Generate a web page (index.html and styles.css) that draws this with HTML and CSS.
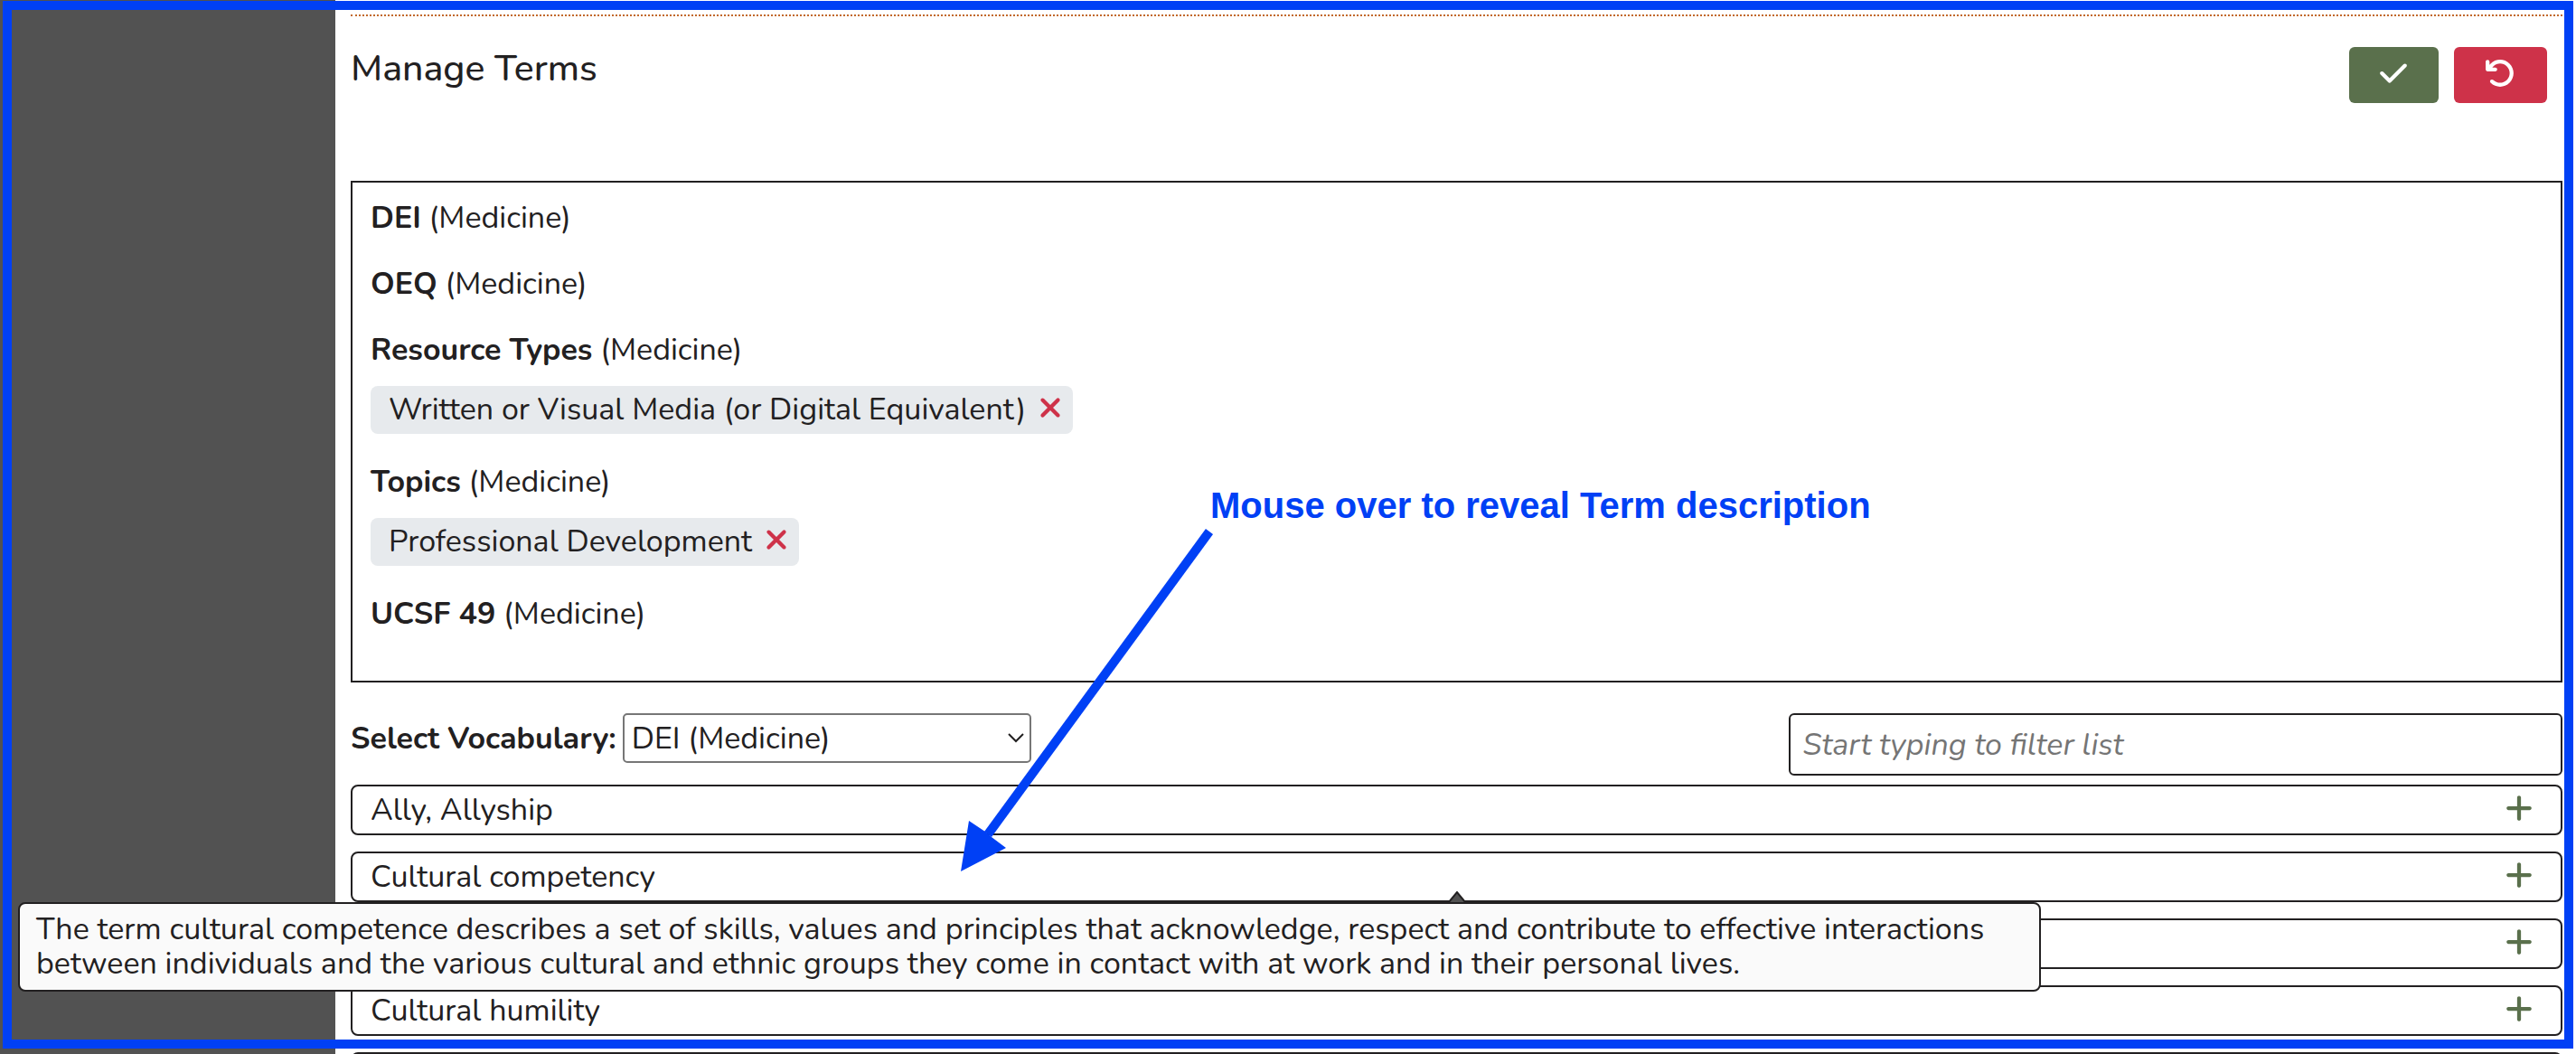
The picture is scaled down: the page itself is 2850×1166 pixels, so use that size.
FILE: index.html
```html
<!DOCTYPE html>
<html lang="en">
<head>
  <meta charset="utf-8">
  <title>Manage Terms</title>
  <link rel="stylesheet" href="styles.css">
</head>
<body>
  <svg class="sprite" aria-hidden="true">
    <symbol id="icon-check" viewBox="0 0 448 512"><path d="M438.6 105.4c12.5 12.5 12.5 32.8 0 45.3l-256 256c-12.5 12.5-32.8 12.5-45.3 0l-128-128c-12.5-12.5-12.5-32.8 0-45.3s32.8-12.5 45.3 0L160 338.7 393.4 105.4c12.5-12.5 32.8-12.5 45.3 0z"/></symbol>
    <symbol id="icon-undo" viewBox="0 0 512 512"><path d="M125.7 160H176c17.7 0 32 14.3 32 32s-14.3 32-32 32H48c-17.7 0-32-14.3-32-32V64c0-17.7 14.3-32 32-32s32 14.3 32 32v51.2L97.6 97.6c87.5-87.5 229.3-87.5 316.8 0s87.5 229.3 0 316.8s-229.3 87.5-316.8 0c-12.5-12.5-12.5-32.8 0-45.3s32.8-12.5 45.3 0c62.5 62.5 163.8 62.5 226.3 0s62.5-163.8 0-226.3s-163.8-62.5-226.3 0L125.7 160z"/></symbol>
    <symbol id="icon-remove" viewBox="0 0 384 512"><path d="M342.6 150.6c12.5-12.5 12.5-32.8 0-45.3s-32.8-12.5-45.3 0L192 210.7 86.6 105.4c-12.5-12.5-32.8-12.5-45.3 0s-12.5 32.8 0 45.3L146.7 256 41.4 361.4c-12.5 12.5-12.5 32.8 0 45.3s32.8 12.5 45.3 0L192 301.3 297.4 406.6c12.5 12.5 32.8 12.5 45.3 0s12.5-32.8 0-45.3L237.3 256 342.6 150.6z"/></symbol>
    <symbol id="icon-plus" viewBox="0 0 448 512"><path d="M256 80c0-17.7-14.3-32-32-32s-32 14.3-32 32V224H48c-17.7 0-32 14.3-32 32s14.3 32 32 32H192V432c0 17.7 14.3 32 32 32s32-14.3 32-32V288H400c17.7 0 32-14.3 32-32s-14.3-32-32-32H256V80z"/></symbol>
  </svg>

  <div class="app">
    <aside class="sidebar"></aside>
    <main class="content">
      <header class="header">
        <h1 class="title">Manage Terms</h1>
        <div class="actions">
          <button class="action action-save" type="button" aria-label="Save"><svg class="icon"><use href="#icon-check"/></svg></button>
          <button class="action action-cancel" type="button" aria-label="Cancel"><svg class="icon icon-wide"><use href="#icon-undo"/></svg></button>
        </div>
      </header>

      <ul class="selected">
        <li class="vocabulary"><strong>DEI</strong> (Medicine)</li>
        <li class="vocabulary"><strong>OEQ</strong> (Medicine)</li>
        <li class="vocabulary"><strong>Resource Types</strong> (Medicine)
          <div class="chips">
            <span class="chip">Written or Visual Media (or Digital Equivalent)<button class="chip-remove" type="button" aria-label="Remove"><svg class="icon icon-narrow"><use href="#icon-remove"/></svg></button></span>
          </div>
        </li>
        <li class="vocabulary"><strong>Topics</strong> (Medicine)
          <div class="chips">
            <span class="chip">Professional Development<button class="chip-remove" type="button" aria-label="Remove"><svg class="icon icon-narrow"><use href="#icon-remove"/></svg></button></span>
          </div>
        </li>
        <li class="vocabulary"><strong>UCSF 49</strong> (Medicine)</li>
      </ul>

      <div class="toolbar">
        <div class="picker">
          <label class="picker-label" for="vocabulary">Select Vocabulary:</label>
          <div class="select-wrap">
            <select class="select" id="vocabulary"><option>DEI (Medicine)</option></select>
            <svg class="chevron" viewBox="0 0 18 11" aria-hidden="true"><path d="M1 1l8 8 8-8"/></svg>
          </div>
        </div>
        <input class="filter" type="text" placeholder="Start typing to filter list" aria-label="Filter list">
      </div>

      <ul class="terms">
        <li class="term"><span class="term-name">Ally, Allyship</span><button class="term-add" type="button" aria-label="Add"><svg class="icon"><use href="#icon-plus"/></svg></button></li>
        <li class="term"><span class="term-name">Cultural competency</span><button class="term-add" type="button" aria-label="Add"><svg class="icon"><use href="#icon-plus"/></svg></button>
          <svg class="tooltip-arrow" viewBox="0 0 20 12" aria-hidden="true"><path d="M1 12L10 1l9 11"/></svg>
          <div class="tooltip" role="tooltip">The term cultural competence describes a set of skills, values and principles that acknowledge, respect and contribute to effective interactions between individuals and the various cultural and ethnic groups they come in contact with at work and in their personal lives.</div>
        </li>
        <li class="term"><span class="term-name"></span><button class="term-add" type="button" aria-label="Add"><svg class="icon"><use href="#icon-plus"/></svg></button></li>
        <li class="term"><span class="term-name">Cultural humility</span><button class="term-add" type="button" aria-label="Add"><svg class="icon"><use href="#icon-plus"/></svg></button></li>
        <li class="term"><span class="term-name"></span></li>
      </ul>
    </main>
  </div>

  <p class="callout">Mouse over to reveal Term description</p>
  <svg class="callout-arrow" viewBox="0 0 300 390" aria-hidden="true">
    <path class="callout-shaft" d="M288 8L43 343"/>
    <path class="callout-head" d="M13 384L22 328L40 340L47 346L63 358Z"/>
  </svg>
  <div class="frame"></div>
</body>
</html>
```
FILE: styles.css
```css
:root {
  --text: #222021;
  --green: #5a704c;
  --red: #ce3249;
  --blue: #0040f5;
}

* {
  box-sizing: border-box;
}

body {
  position: relative;
  height: 100vh;
  margin: 0;
  overflow: hidden;
  background: #fff;
  color: var(--text);
  font: 34px/46px Nunito, "Noto Sans", sans-serif;
}

ul,
p {
  margin: 0;
  padding: 0;
  list-style: none;
}

button {
  margin: 0;
  padding: 0;
  border: 0;
  background: none;
  cursor: pointer;
}

.sprite {
  position: absolute;
  width: 0;
  height: 0;
}

.icon {
  display: block;
  width: 30px;
  height: 34px;
  fill: currentColor;
}

.icon-wide {
  width: 34px;
}

.icon-narrow {
  width: 26px;
}

.app {
  display: flex;
  min-height: 100%;
}

.sidebar {
  flex: none;
  width: 371px;
  background: #525252;
}

.content {
  flex: 1;
  min-width: 0;
  padding: 16px 15px 0 17px;
}

/* Heading and actions */
.header {
  display: flex;
  justify-content: space-between;
  align-items: flex-start;
  padding: 30px 17px 86px 0;
  border-top: 2px dotted #c2692a;
}

.title {
  margin: 0;
  font-size: 41px;
  font-weight: 500;
  line-height: 56px;
}

.actions {
  display: flex;
  gap: 17px;
  padding-top: 4px;
}

.action {
  display: flex;
  justify-content: center;
  align-items: center;
  width: 99px;
  height: 62px;
  padding: 0 2px 4px 0;
  border-radius: 6px;
  color: #fff;
}

.action-save {
  background: var(--green);
}

.action-cancel {
  width: 103px;
  background: var(--red);
}

/* Selected terms */
.selected {
  padding: 16px 20px 51px;
  border: 2px solid var(--text);
}

.vocabulary + .vocabulary {
  margin-top: 27px;
}

.chips {
  display: flex;
  padding: 17px 0 3px;
}

.chip {
  display: flex;
  align-items: center;
  gap: 14px;
  padding: 3px 12px 4px 20px;
  border-radius: 8px;
  background: #e7eaed;
}

.chip-remove {
  padding-bottom: 4px;
  color: var(--red);
}

/* Vocabulary picker and filter */
.toolbar {
  display: flex;
  justify-content: space-between;
  align-items: flex-start;
  padding: 34px 0 10px;
}

.picker {
  display: flex;
  align-items: center;
  gap: 7px;
}

.picker-label {
  font-weight: 700;
}

.select-wrap {
  position: relative;
}

.select {
  display: block;
  width: 452px;
  height: 55px;
  padding: 0 40px 0 8px;
  border: 2px solid #767676;
  border-radius: 5px;
  appearance: none;
  background: #fff;
  color: inherit;
  font: inherit;
}

.chevron {
  position: absolute;
  top: 22px;
  right: 8px;
  width: 18px;
  height: 11px;
  fill: none;
  stroke: var(--text);
  stroke-width: 2;
  pointer-events: none;
}

.filter {
  width: 35%;
  height: 69px;
  padding: 0 14px;
  border: 2px solid var(--text);
  border-radius: 6px;
  background: #fff;
  color: inherit;
  font: inherit;
}

.filter::placeholder {
  color: #757575;
  font-style: italic;
}

/* Available terms */
.terms {
  display: flex;
  flex-direction: column;
  gap: 18px;
}

.term {
  position: relative;
  display: flex;
  justify-content: space-between;
  align-items: center;
  min-height: 56px;
  padding: 0 31px 0 20px;
  border: 2px solid var(--text);
  border-radius: 8px;
}

.term-add {
  padding-bottom: 4px;
  color: var(--green);
}

.tooltip {
  position: absolute;
  z-index: 1;
  top: 54px;
  left: -370px;
  width: calc(100% - 205px);
  padding: 9px 18px 10px;
  border: 2px solid var(--text);
  border-radius: 8px;
  background: #fafafa;
  line-height: 38px;
}

.tooltip-arrow {
  position: absolute;
  z-index: 1;
  top: 42px;
  left: calc(50% - 10px);
  width: 20px;
  height: 12px;
  fill: #525252;
  stroke: var(--text);
  stroke-width: 2;
}

/* Annotations */
.callout {
  position: absolute;
  top: 536px;
  left: 1339px;
  color: var(--blue);
  font: 700 40px/46px "Liberation Sans", Arial, sans-serif;
  white-space: nowrap;
}

.callout-arrow {
  position: absolute;
  z-index: 2;
  top: 580px;
  left: 1050px;
  width: 300px;
  height: 390px;
  pointer-events: none;
}

.callout-shaft {
  stroke: var(--blue);
  stroke-width: 10;
}

.callout-head {
  fill: var(--blue);
}

.frame {
  position: absolute;
  z-index: 3;
  inset: 1px 3px 6px;
  border: 10px solid var(--blue);
  pointer-events: none;
}
```
